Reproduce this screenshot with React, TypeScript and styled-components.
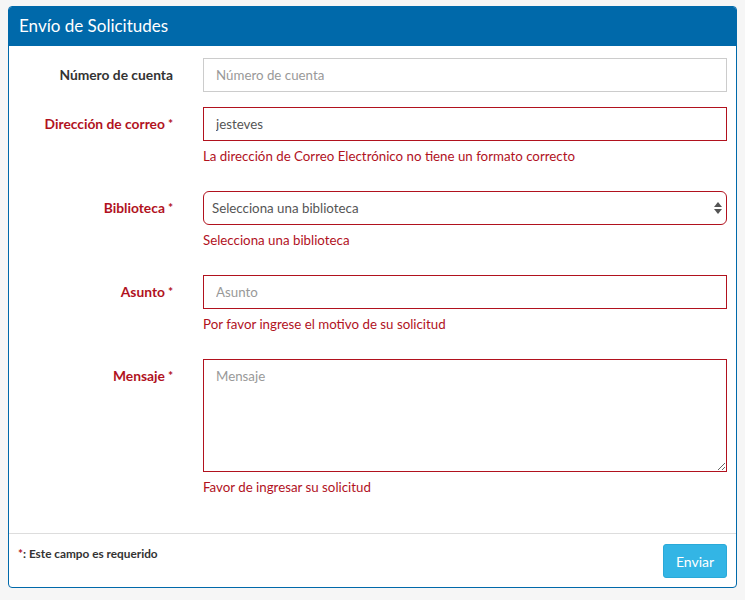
import React from "react";
import styled, { createGlobalStyle } from "styled-components";

const Global = createGlobalStyle`
  html, body { margin: 0; padding: 0; background: #f6f6f6; }
  body { font-family: "Source Sans Pro", Lato, "Open Sans", sans-serif; color: #333; }
  * { box-sizing: border-box; }
`;

const Page = styled.div`
  padding: 6px 8px 12px 8px;
`;

const Panel = styled.div`
  background: #fff;
  border: 1px solid #0069aa;
  border-radius: 4px;
  overflow: hidden;
`;

const Header = styled.div`
  background: #0069aa;
  color: #fff;
  height: 39px;
  padding: 0 10px;
  display: flex;
  align-items: center;
  font-size: 17px;
  padding-bottom: 2px;
`;

const Body = styled.div`
  padding: 12px 9px 26px 0;
  display: grid;
  grid-template-columns: 164px 1fr;
  column-gap: 30px;
  row-gap: 15px;
  border-bottom: 1px solid #ddd;
`;

const Label = styled.label<{ $error?: boolean }>`
  font-size: 13.8px;
  font-weight: 700;
  text-align: right;
  padding-top: 7px;
  line-height: 20px;
  color: ${(p) => (p.$error ? "#b1121e" : "#333")};
`;

const Star = styled.span`
  font-size: 12px;
  margin-left: 3px;
  vertical-align: 1px;
`;

const Field = styled.div`
  display: flex;
  flex-direction: column;
`;

const Input = styled.input<{ $error?: boolean }>`
  height: 34px;
  width: 100%;
  padding: 0 12px;
  font: inherit;
  font-size: 13.3px;
  color: #555;
  border: 1px solid ${(p) => (p.$error ? "#b1121e" : "#ccc")};
  border-radius: 0;
  outline: none;
  &::placeholder { color: #999; }
`;

const TextArea = styled.textarea`
  height: 113px;
  width: 100%;
  padding: 8px 12px;
  font: inherit;
  font-size: 13.3px;
  color: #555;
  border: 1px solid #b1121e;
  border-radius: 0;
  outline: none;
  resize: vertical;
  display: block;
  &::placeholder { color: #999; }
`;

const SelectWrap = styled.div`
  position: relative;
`;

const Select = styled.select`
  appearance: none;
  -webkit-appearance: none;
  height: 34px;
  width: 100%;
  padding: 0 28px 0 8px;
  font: inherit;
  font-size: 13.3px;
  color: #555;
  background: #fff;
  border: 1px solid #b1121e;
  border-radius: 6px;
  outline: none;
`;

const Arrows = styled.svg`
  position: absolute;
  right: 5px;
  top: 11px;
  pointer-events: none;
`;

const Help = styled.div`
  margin-top: 5px;
  margin-bottom: 10px;
  font-size: 13.3px;
  line-height: 20px;
  color: #b1121e;
`;

const Footer = styled.div`
  padding: 10px 9px 9px 9px;
  display: flex;
  justify-content: space-between;
  align-items: flex-start;
`;

const Note = styled.div`
  font-size: 11.8px;
  font-weight: 700;
  color: #333;
  padding-top: 2px;
  span { color: #b1121e; }
`;

const Button = styled.button`
  height: 34px;
  width: 64px;
  background: #33b5e5;
  color: #fff;
  border: 1px solid #2aa9d8;
  border-radius: 3px;
  font: inherit;
  font-size: 14px;
`;

export default function App() {
  return (
    <>
      <Global />
      <Page>
        <Panel>
          <Header>Envío de Solicitudes</Header>
          <Body>
            <Label>Número de cuenta</Label>
            <Field>
              <Input placeholder="Número de cuenta" />
            </Field>

            <Label $error>
              Dirección de correo<Star>*</Star>
            </Label>
            <Field>
              <Input $error defaultValue="jesteves" />
              <Help>La dirección de Correo Electrónico no tiene un formato correcto</Help>
            </Field>

            <Label $error>
              Biblioteca<Star>*</Star>
            </Label>
            <Field>
              <SelectWrap>
                <Select defaultValue="">
                  <option value="">Selecciona una biblioteca</option>
                </Select>
                <Arrows width="8" height="12" viewBox="0 0 8 12">
                  <path d="M4 0 L8 5 L0 5 Z" fill="#555" />
                  <path d="M4 12 L8 7 L0 7 Z" fill="#555" />
                </Arrows>
              </SelectWrap>
              <Help>Selecciona una biblioteca</Help>
            </Field>

            <Label $error>
              Asunto<Star>*</Star>
            </Label>
            <Field>
              <Input $error placeholder="Asunto" />
              <Help>Por favor ingrese el motivo de su solicitud</Help>
            </Field>

            <Label $error>
              Mensaje<Star>*</Star>
            </Label>
            <Field>
              <TextArea placeholder="Mensaje" />
              <Help>Favor de ingresar su solicitud</Help>
            </Field>
          </Body>
          <Footer>
            <Note>
              <span>*</span>: Este campo es requerido
            </Note>
            <Button>Enviar</Button>
          </Footer>
        </Panel>
      </Page>
    </>
  );
}
